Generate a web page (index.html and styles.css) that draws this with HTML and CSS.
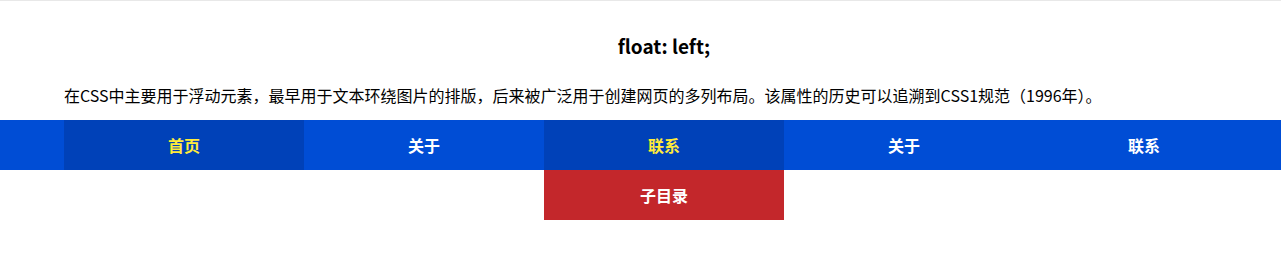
FILE: index.html
```html
<!DOCTYPE html>
<html>
    <head>
        <title>float: left;</title>
        <meta charset="utf-8"/>
        <link rel="stylesheet" href="styles.css">
    </head>
    <body class="body">
        <div class="wrap">
            <h3 class="title">float: left;</h3>
            <p class="desc">在CSS中主要用于浮动元素，最早用于文本环绕图片的排版，后来被广泛用于创建网页的多列布局。该属性的历史可以追溯到CSS1规范（1996年）。</p>
        </div>
        <div class="nav">
            <div class="menu">
                <div class="item active">首页</div>
                <div class="item">关于</div>
                <div class="item drop">
                    <div class="label active">联系</div>
                    <div class="sub">子目录</div>
                </div>
                <div class="item">关于</div>
                <div class="item">联系</div>
            </div>
        </div>
    </body>
</html>
```

FILE: styles.css
```css
.body{
    margin:0px;
    border-top:1px solid #e8e8e8;
    font-family:"Noto Sans CJK SC","Noto Sans",sans-serif;
    color:#000;
    background-color:white;
    min-height:265px;
}
.wrap{
    width:1200px;
    margin-left:64px;
}
.title{
    margin:0px;
    padding-top:29px;
    height:31px;
    font-size:19px;
    font-weight:bold;
    line-height:31px;
    text-align:center;
}
.desc{
    margin:0px;
    padding-top:19px;
    height:40px;
    font-size:16px;
    line-height:30px;
}
.nav{
    background-color:#004dd5;
    height:50px;
}
.menu{
    margin:0px;
    padding:0px 0px 0px 64px;
    display:flex;
    align-items:flex-start;
}
.item{
    width:240px;
    height:50px;
    line-height:50px;
    text-align:center;
    color:white;
    font-size:16px;
    font-weight:bold;
}
.drop{
    height:auto;
}
.label{
    height:50px;
}
.active{
    background-color:#0041b8;
    color:#ffeb3b;
}
.sub{
    height:50px;
    background-color:#c3272b;
    color:white;
}
```
